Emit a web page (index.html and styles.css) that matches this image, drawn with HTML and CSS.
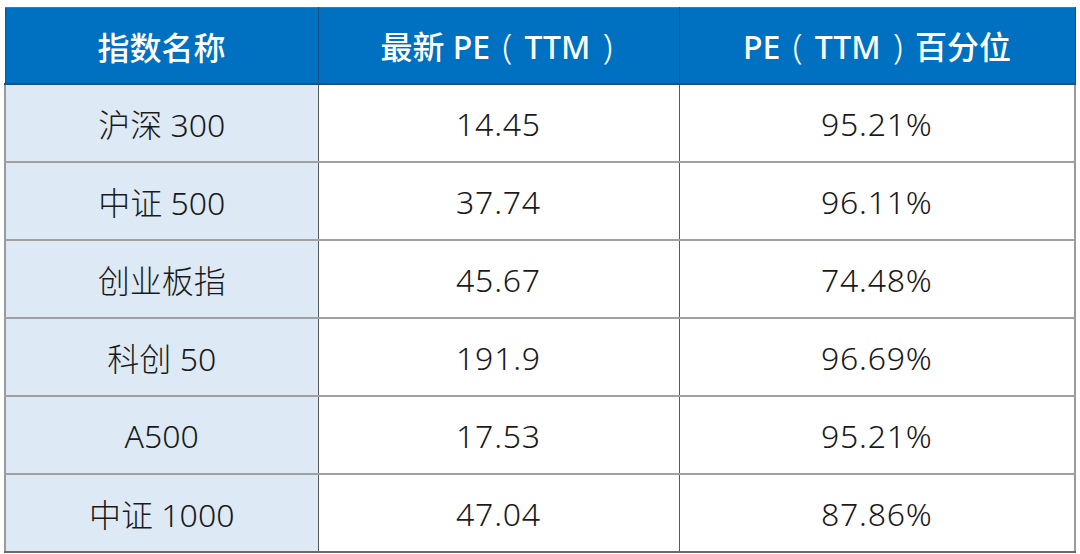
FILE: index.html
```html
<!DOCTYPE html>
<html lang="zh-CN">
<head>
<meta charset="utf-8">
<title>指数估值</title>
<link rel="stylesheet" href="styles.css">
</head>
<body>
<table class="pe-table">
  <colgroup>
    <col class="c1">
    <col class="c2">
    <col class="c3">
  </colgroup>
  <thead>
    <tr class="head">
      <th>指数名称</th>
      <th>最新 PE <span class="p">(</span> TTM <span class="p">)</span></th>
      <th>PE <span class="p">(</span> TTM <span class="p">)</span> 百分位</th>
    </tr>
  </thead>
  <tbody>
    <tr><td class="name">沪深 300</td><td class="num">14.45</td><td class="num">95.21%</td></tr>
    <tr><td class="name">中证 500</td><td class="num">37.74</td><td class="num">96.11%</td></tr>
    <tr><td class="name">创业板指</td><td class="num">45.67</td><td class="num">74.48%</td></tr>
    <tr><td class="name">科创 50</td><td class="num">191.9</td><td class="num">96.69%</td></tr>
    <tr><td class="name">A500</td><td class="num">17.53</td><td class="num">95.21%</td></tr>
    <tr><td class="name">中证 1000</td><td class="num">47.04</td><td class="num">87.86%</td></tr>
  </tbody>
</table>
</body>
</html>
```
FILE: styles.css
```css
html, body {
  margin: 0;
  padding: 0;
  background: #ffffff;
}
body {
  padding: 7px 0 0 4px;
  font-family: "Noto Sans", "Noto Sans CJK SC", sans-serif;
}
.pe-table {
  border-collapse: collapse;
  table-layout: fixed;
  width: 1070px;
}
.c1 { width: 313px; }
.c2 { width: 361px; }
.c3 { width: 396px; }

.head th {
  height: 75px;
  background: #0070c0;
  color: #ffffff;
  font-family: "Noto Sans", "Noto Sans CJK SC", sans-serif;
  font-weight: 500;
  font-size: 32px;
  text-align: center;
  vertical-align: middle;
  padding: 0;
  border-left: 1px solid #1b4f80;
  border-right: 1px solid #1b4f80;
  border-bottom: 2px solid #1b4f80;
  border-top: 1px solid #2f7fc4;
}
.head .p {
  font-weight: 300;
  font-size: 35px;
  margin: 0 4px;
}
tbody td {
  height: 76px;
  padding: 0;
  text-align: center;
  vertical-align: middle;
  font-size: 32px;
  font-weight: 300;
  color: #1a1a1a;
  background: #ffffff;
  border-left: 1px solid #555a60;
  border-right: 1px solid #555a60;
  border-bottom: 2px solid #a0a0a0;
}
tbody td.num {
  letter-spacing: 0.8px;
}
tbody td.name {
  background: #ddeaf6;
  border-left: 2px solid #9a9a9a;
}
tbody td:last-child {
  border-right: 2px solid #9a9a9a;
}
tbody tr:last-child td {
  border-bottom: 2px solid #6a6a6a;
}
```
